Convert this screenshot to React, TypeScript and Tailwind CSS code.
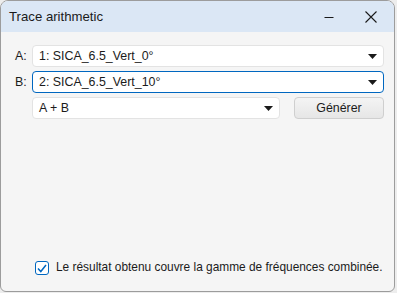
const font = { fontFamily: '"Segoe UI", "Liberation Sans", Arial, sans-serif' };

function Caret() {
  return (
    <svg width="9" height="5" viewBox="0 0 9 5" className="shrink-0">
      <path d="M0 0h9L4.5 5z" fill="#1a1a1a" />
    </svg>
  );
}

function Combo({ value, focused, className }: { value: string; focused?: boolean; className?: string }) {
  return (
    <div
      className={`flex h-[22px] items-center justify-between rounded-[4px] border bg-white pl-[6px] pr-[6px] text-[12.4px] text-[#1b1b1b] ${
        focused ? "border-[#0067c0]" : "border-[#e3e3e3]"
      } ${className ?? ""}`}
    >
      <span>{value}</span>
      <Caret />
    </div>
  );
}

export default function App() {
  return (
    <div className="h-[293px] w-[397px] bg-[#ededed]" style={font}>
      <div className="flex h-[292px] w-[395px] flex-col overflow-hidden rounded-t-[8px] rounded-b-[6px] border border-[#9c9c9c] bg-[#f5f5f5]">
        <div className="flex h-[31px] shrink-0 items-center justify-between bg-[#dbe7f5] pl-[8px] pr-[2px]">
          <span className="text-[13.2px] text-[#1a1a1a]">Trace arithmetic</span>
          <div className="flex h-full items-center">
            <div className="flex w-[42px] items-center justify-center">
              <svg width="10" height="10" viewBox="0 0 10 10">
                <path d="M0.5 5.5h9" stroke="#1a1a1a" strokeWidth="1" />
              </svg>
            </div>
            <div className="flex w-[42px] items-center justify-center">
              <svg width="12" height="12" viewBox="0 0 12 12">
                <path d="M0.5 0.5l11 11M11.5 0.5l-11 11" stroke="#1a1a1a" strokeWidth="1.1" />
              </svg>
            </div>
          </div>
        </div>
        <div className="flex flex-1 flex-col pl-[14px] pr-[10px] pt-[13px] pb-[14px]">
          <div className="flex items-center gap-[3px]">
            <span className="w-[14px] text-[12.4px] text-[#1b1b1b]">A:</span>
            <Combo value="1: SICA_6.5_Vert_0°" className="flex-1" />
          </div>
          <div className="mt-[4px] flex items-center gap-[3px]">
            <span className="w-[14px] text-[12.4px] text-[#1b1b1b]">B:</span>
            <Combo value="2: SICA_6.5_Vert_10°" focused className="flex-1" />
          </div>
          <div className="mt-[4px] flex items-center pl-[17px]">
            <Combo value="A + B" className="w-[248px]" />
            <button className="ml-auto flex h-[22px] w-[90px] items-center justify-center rounded-[4px] border border-[#cfcfcf] bg-gradient-to-b from-[#f4f4f4] to-[#e6e6e6] text-[12.4px] text-[#1b1b1b]">
              Générer
            </button>
          </div>
          <div className="mt-auto flex items-center pl-[20px]">
            <div className="flex h-[14px] w-[14px] shrink-0 items-center justify-center rounded-[3px] border border-[#0067c0] bg-white">
              <svg width="10" height="9" viewBox="0 0 10 9">
                <path d="M1 4.5l2.8 3L9 1" fill="none" stroke="#0067c0" strokeWidth="1.5" />
              </svg>
            </div>
            <span className="ml-[7px] whitespace-nowrap text-[11.9px] text-[#1b1b1b]">
              Le résultat obtenu couvre la gamme de fréquences combinée.
            </span>
          </div>
        </div>
      </div>
    </div>
  );
}
